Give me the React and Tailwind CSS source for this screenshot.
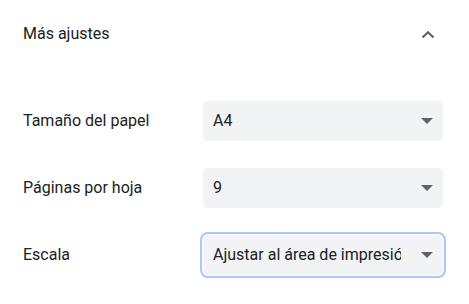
import { useState } from 'react';

const rows = [
    { label: 'Tamaño del papel', value: 'A4' },
    { label: 'Páginas por hoja', value: '9' },
    { label: 'Escala', value: 'Ajustar al área de impresión', focused: true },
];

function SelectBox({ value, focused }) {
    return (
        <div
            className={
                'relative flex items-center w-[240px] h-[40px] rounded-[5px] bg-[#f1f3f4] ' +
                (focused ? 'outline-2 outline-offset-[1px] outline-[#a8c7fa]' : '')
            }
        >
            <div className="pl-[10px] w-[198px] overflow-hidden whitespace-nowrap text-[16px] text-[#202124]">
                {value}
            </div>
            {/* dropdown arrow */}
            <svg className="absolute right-[10px] top-[17px]" width="12" height="6" viewBox="0 0 12 6">
                <path d="M0 0 L12 0 L6 6 Z" fill="#5f6368" />
            </svg>
        </div>
    );
}

function App() {
    const [open, setOpen] = useState(true);

    return (
        <div className="w-[469px] h-[304px] bg-white px-[23px] font-['Roboto',sans-serif] text-[#202124]">

            {/* Header */}
            <div className="flex items-center justify-between h-[68px]" onClick={() => setOpen(!open)}>
                <span className="text-[16px]">Más ajustes</span>
                <svg className="mr-[11px]" width="14" height="9" viewBox="0 0 14 9">
                    <path d="M1.5 7.5 L7 2.2 L12.5 7.5" fill="none" stroke="#5f6368" strokeWidth="2.2" />
                </svg>
            </div>

            {/* Settings */}
            <div className="mt-[19px]">
                {rows.map((row) => (
                    <div key={row.label} className="flex items-center h-[67px]">
                        <span className="w-[180px] text-[16px]">{row.label}</span>
                        <SelectBox value={row.value} focused={row.focused} />
                    </div>
                ))}
            </div>
        </div>
    );
}

export default App;
